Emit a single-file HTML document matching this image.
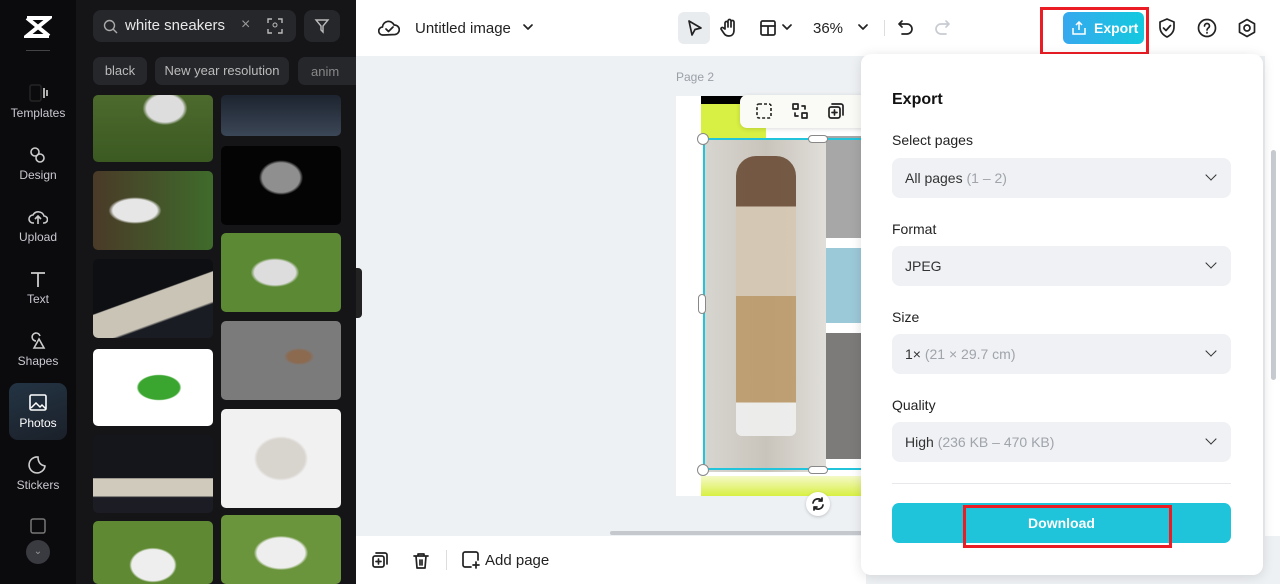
<!DOCTYPE html>
<html><head><meta charset="utf-8"><style>
*{box-sizing:border-box;margin:0;padding:0}
body{width:1280px;height:584px;overflow:hidden;font-family:"Liberation Sans",sans-serif;background:#eef1f4;position:relative}
.abs{position:absolute}
.nav{left:0;top:0;width:76px;height:584px;background:#0b0b0e}
.navi{position:absolute;left:0;width:76px;text-align:center;color:#c9c9cf;font-size:12px}
.navi svg{display:block;margin:0 auto 4px}
.panel{left:76px;top:0;width:280px;height:584px;background:#151518}
.tile{position:absolute;border-radius:5px;overflow:hidden}
.top{left:356px;top:0;width:924px;height:56px;background:#fff}
.exp{left:861px;top:54px;width:402px;height:521px;background:#fff;border-radius:10px;box-shadow:0 2px 12px rgba(0,0,0,.12)}
.lbl{position:absolute;left:31px;font-size:14px;color:#222}
.sel{position:absolute;left:31px;width:339px;height:40px;background:#eff1f4;border-radius:8px;font-size:14px;color:#333;padding:12px 13px}
.sel span{color:#a0a4ab}
.sel i{position:absolute;right:16px;top:13px;width:8px;height:8px;border-right:1.6px solid #333;border-bottom:1.6px solid #333;transform:rotate(45deg)}
.ic{stroke:#222;fill:none;stroke-width:1.7;stroke-linecap:round;stroke-linejoin:round}
</style></head><body>
<div class="abs nav">
 <div class="navi" style="top:14px"><svg width="28" height="26" viewBox="0 0 28 26"><path d="M3 4h22L3 22h22M3 4l22 18" stroke="#fff" stroke-width="4" fill="none"/></svg></div>
 <div style="position:absolute;left:26px;top:50px;width:24px;height:1px;background:#444"></div>
 <div class="navi" style="top:84px"><svg width="20" height="18" viewBox="0 0 20 18"><rect x="2" y="1" width="11" height="16" rx="2" class="ic" stroke="#ccc"/><path d="M16 4v10M19 6v6" stroke="#ccc" stroke-width="1.7"/></svg>Templates</div>
 <div class="navi" style="top:146px"><svg width="20" height="18" viewBox="0 0 20 18"><circle cx="7" cy="6" r="4" stroke="#ccc" fill="none" stroke-width="1.6"/><circle cx="12" cy="12" r="4" stroke="#ccc" fill="none" stroke-width="1.6"/></svg>Design</div>
 <div class="navi" style="top:208px"><svg width="20" height="18" viewBox="0 0 20 18"><path d="M6 15H5a4 4 0 010-8 6 6 0 0111 1 3.5 3.5 0 010 7h-1M10 16V9M7 11l3-3 3 3" stroke="#ccc" fill="none" stroke-width="1.6"/></svg>Upload</div>
 <div class="navi" style="top:270px"><svg width="20" height="18" viewBox="0 0 20 18"><path d="M3 3h14M10 3v14" stroke="#ccc" stroke-width="1.8"/></svg>Text</div>
 <div class="navi" style="top:332px"><svg width="20" height="18" viewBox="0 0 20 18"><path d="M8 9a4 4 0 114-5M6 16l5-9 5 9z" stroke="#ccc" fill="none" stroke-width="1.6"/></svg>Shapes</div>
 <div style="position:absolute;left:9px;top:383px;width:58px;height:57px;border-radius:9px;background:linear-gradient(160deg,#243444,#1a2029)"></div>
 <div class="navi" style="top:394px;color:#fff"><svg width="20" height="18" viewBox="0 0 20 18"><rect x="2" y="1" width="16" height="15" rx="1.5" stroke="#fff" fill="none" stroke-width="1.6"/><path d="M3 14l5-5 4 4 2-2 4 4" stroke="#fff" fill="none" stroke-width="1.5"/></svg>Photos</div>
 <div class="navi" style="top:456px"><svg width="20" height="18" viewBox="0 0 20 18"><path d="M17 10A8 8 0 1110 1c0 5 2 8 7 9z" stroke="#ccc" fill="none" stroke-width="1.6"/></svg>Stickers</div>
 <div class="navi" style="top:518px"><svg width="18" height="16"><rect x="2" y="1" width="14" height="14" rx="2" stroke="#777" fill="none" stroke-width="1.5"/></svg></div>
 <div style="position:absolute;left:26px;top:540px;width:24px;height:24px;border-radius:50%;background:#3a3b40;color:#999;font-size:10px;text-align:center;line-height:24px">⌄</div>
</div>
<div class="abs panel">
 <div class="abs" style="left:17px;top:10px;width:203px;height:32px;background:#26272b;border-radius:8px;color:#e8e8e8;font-size:15px;padding:7px 0 0 32px">white sneakers
  <svg class="abs" style="left:10px;top:9px" width="15" height="15"><circle cx="6.5" cy="6.5" r="5" stroke="#aaa" fill="none" stroke-width="1.4"/><path d="M10 10l4 4" stroke="#aaa" stroke-width="1.4"/></svg>
  <span class="abs" style="left:148px;top:6px;color:#999;font-size:16px">×</span>
  <svg class="abs" style="left:174px;top:8px" width="16" height="16"><path d="M1 5V1h4M11 1h4v4M15 11v4h-4M5 15H1v-4" stroke="#bbb" fill="none" stroke-width="1.4"/><circle cx="8" cy="7" r="2" stroke="#bbb" fill="none"/></svg>
 </div>
 <div class="abs" style="left:228px;top:10px;width:36px;height:32px;background:#26272b;border-radius:8px"><svg class="abs" style="left:10px;top:8px" width="16" height="16"><path d="M2 2h12l-5 6v6l-2-2V8z" stroke="#bbb" fill="none" stroke-width="1.4"/></svg></div>
 <div class="abs" style="left:17px;top:57px;width:54px;height:28px;background:#26272b;border-radius:7px;color:#bbb;font-size:13px;text-align:center;line-height:28px">black</div>
 <div class="abs" style="left:79px;top:57px;width:134px;height:28px;background:#26272b;border-radius:7px;color:#bbb;font-size:13px;text-align:center;line-height:28px">New year resolution</div>
 <div class="abs" style="left:222px;top:57px;width:58px;height:28px;background:#26272b;border-radius:7px 0 0 7px;color:#888;font-size:13px;padding:7px 0 0 13px;overflow:hidden">anim</div>
 <div class="tile" style="left:17px;top:95px;width:120px;height:67px;background:radial-gradient(ellipse at 60% 20%,#ddd 0 18%,transparent 22%),linear-gradient(#4d6a2d,#3b5a22)"></div>
 <div class="tile" style="left:17px;top:171px;width:120px;height:79px;background:radial-gradient(ellipse at 35% 50%,#e6e6e6 0 20%,transparent 24%),linear-gradient(90deg,#4a3a28,#3f6b2b)"></div>
 <div class="tile" style="left:17px;top:259px;width:120px;height:79px;background:linear-gradient(160deg,#0e0f13 0 45%,#c9c4b6 46% 70%,#1a1c24 72%)"></div>
 <div class="tile" style="left:17px;top:349px;width:120px;height:77px;background:radial-gradient(ellipse at 55% 50%,#3aa630 0 22%,transparent 24%),#fff"></div>
 <div class="tile" style="left:17px;top:435px;width:120px;height:78px;background:linear-gradient(#15161b 0 55%,#cfcabc 56% 78%,#1c1d24 80%)"></div>
 <div class="tile" style="left:17px;top:521px;width:120px;height:63px;background:radial-gradient(ellipse at 50% 70%,#eee 0 25%,transparent 28%),#5f8a33"></div>
 <div class="tile" style="left:145px;top:95px;width:120px;height:41px;background:linear-gradient(#1d2430,#3b4656)"></div>
 <div class="tile" style="left:145px;top:146px;width:120px;height:79px;background:radial-gradient(ellipse at 50% 40%,#8f8f8f 0 22%,transparent 26%),#040404"></div>
 <div class="tile" style="left:145px;top:233px;width:120px;height:79px;background:radial-gradient(ellipse at 45% 50%,#ddd 0 22%,transparent 26%),#5c8a34"></div>
 <div class="tile" style="left:145px;top:321px;width:120px;height:79px;background:radial-gradient(ellipse at 65% 45%,#8b6a50 0 10%,transparent 14%),#7c7b7c"></div>
 <div class="tile" style="left:145px;top:409px;width:120px;height:99px;background:radial-gradient(ellipse at 50% 50%,#d8d4ce 0 28%,transparent 32%),#f1f1f1"></div>
 <div class="tile" style="left:145px;top:515px;width:120px;height:69px;background:radial-gradient(ellipse at 50% 55%,#eee 0 28%,transparent 32%),#6b953c"></div>
</div>
<div class="abs" style="left:356px;top:268px;width:6px;height:50px;background:#222;border-radius:0 4px 4px 0"></div>
<div class="abs top">
 <svg class="abs" style="left:22px;top:18px" width="22" height="20"><path d="M6 17H5a4 4 0 01-.5-8A6 6 0 0116 7a4.5 4.5 0 011 9.5L6 17zM8 11l2.5 2.5L15 9" class="ic"/></svg>
 <div class="abs" style="left:59px;top:20px;font-size:15px;color:#222">Untitled image</div>
 <svg class="abs" style="left:166px;top:22px" width="12" height="10"><path d="M2 3l4 4 4-4" class="ic"/></svg>
 <div class="abs" style="left:322px;top:12px;width:32px;height:32px;background:#e9ecef;border-radius:6px"><svg style="margin:7px 0 0 9px" width="16" height="18"><path d="M2 2l12 7-6 1.5L5 16z" class="ic"/></svg></div>
 <svg class="abs" style="left:364px;top:18px" width="18" height="20"><path d="M5 11V5a1.5 1.5 0 013 0v4V3a1.5 1.5 0 013 0v6V4a1.5 1.5 0 013 0v8c0 4-2 6-5 6s-4-1-6-4l-2-3a1.4 1.4 0 012.5-1z" class="ic"/></svg>
 <svg class="abs" style="left:403px;top:19px" width="18" height="18"><rect x="2" y="2" width="14" height="14" rx="1.5" class="ic"/><path d="M2 7h14M9 7v9" class="ic"/></svg>
 <svg class="abs" style="left:426px;top:23px" width="10" height="8"><path d="M1 2l4 4 4-4" class="ic"/></svg>
 <div class="abs" style="left:457px;top:20px;font-size:15px;color:#222">36%</div>
 <svg class="abs" style="left:502px;top:23px" width="10" height="8"><path d="M1 2l4 4 4-4" class="ic"/></svg>
 <div class="abs" style="left:528px;top:20px;width:1px;height:16px;background:#ddd"></div>
 <svg class="abs" style="left:541px;top:19px" width="18" height="18"><path d="M5 2L2 5l3 3M2 5h8a5 5 0 010 10H5" class="ic"/></svg>
 <svg class="abs" style="left:577px;top:19px" width="18" height="18"><path d="M13 2l3 3-3 3M16 5H8a5 5 0 000 10h5" class="ic" style="stroke:#c8ccd2"/></svg>
 <div class="abs" style="left:684px;top:7px;width:109px;height:48px;border:3px solid #ec1c24"></div>
 <div class="abs" style="left:707px;top:12px;width:81px;height:32px;border-radius:6px;background:linear-gradient(90deg,#37a8ee,#13c9df);color:#fff;font-weight:bold;font-size:14px;padding:8px 0 0 31px;white-space:nowrap">Export
  <svg class="abs" style="left:9px;top:9px" width="14" height="14"><path d="M4 4l3-3 3 3M7 1v8M1 7v6h12V7" stroke="#fff" fill="none" stroke-width="1.5"/></svg></div>
 <svg class="abs" style="left:802px;top:18px" width="18" height="20"><path d="M9 1l7 3v5c0 5-3 8-7 10-4-2-7-5-7-10V4zM5.5 10l2.5 2.5 4.5-5" class="ic"/></svg>
 <svg class="abs" style="left:841px;top:18px" width="20" height="20"><circle cx="10" cy="10" r="8.5" class="ic"/><path d="M7.5 8a2.5 2.5 0 115 0c0 2-2.5 2-2.5 4M10 14.5v.5" class="ic"/></svg>
 <svg class="abs" style="left:881px;top:18px" width="20" height="20"><path d="M10 1.5l7.5 4.25v8.5L10 18.5l-7.5-4.25v-8.5z" class="ic"/><circle cx="10" cy="10" r="3" class="ic"/></svg>
</div>
<div class="abs" style="left:676px;top:70px;font-size:12px;color:#9aa0a8">Page 2</div>
<div class="abs" style="left:676px;top:96px;width:185px;height:400px;background:#fff;overflow:hidden">
 <div class="abs" style="left:25px;top:0;width:160px;height:42px;background:#d8f043"></div>
 <div class="abs" style="left:25px;top:0;width:160px;height:8px;background:#000"></div>
 <div class="abs" style="left:90px;top:10px;width:95px;height:32px;background:#fff"></div>
 <div class="abs" style="left:27px;top:42px;width:158px;height:334px;background:linear-gradient(90deg,#d8d6d1 0,#c9c4bb 40%,#e2e0dc 80%)"></div>
 <div class="abs" style="left:60px;top:60px;width:60px;height:280px;background:linear-gradient(#6a4c36 0 18%,#d5c8b3 18% 50%,#bb9a6a 50% 88%,#f0f0f0 88%);border-radius:20px 20px 6px 6px;opacity:.9"></div>
 <div class="abs" style="left:150px;top:40px;width:35px;height:340px;background:linear-gradient(#a7a7a7 0 30%,#fff 30% 33%,#9cc9d8 33% 55%,#fff 55% 58%,#7d7b7a 58% 95%,#fff 95%)"></div>
 <div class="abs" style="left:25px;top:380px;width:160px;height:20px;background:linear-gradient(#f4f9c8,#d8f043)"></div>
 <div class="abs" style="left:27px;top:42px;width:160px;height:332px;border:2px solid #22c4dc"></div>
</div>
<div class="abs" style="left:697px;top:133px;width:12px;height:12px;border-radius:50%;background:#fff;border:1px solid #888"></div>
<div class="abs" style="left:697px;top:464px;width:12px;height:12px;border-radius:50%;background:#fff;border:1px solid #888"></div>
<div class="abs" style="left:698px;top:294px;width:8px;height:20px;border-radius:4px;background:#fff;border:1px solid #888"></div>
<div class="abs" style="left:808px;top:135px;width:20px;height:8px;border-radius:4px;background:#fff;border:1px solid #888"></div>
<div class="abs" style="left:808px;top:466px;width:20px;height:8px;border-radius:4px;background:#fff;border:1px solid #888"></div>
<div class="abs" style="left:740px;top:95px;width:125px;height:33px;background:#fafaf6;border-radius:7px 0 0 7px;box-shadow:0 1px 5px rgba(0,0,0,.15)">
 <svg class="abs" style="left:16px;top:8px" width="16" height="16"><rect x="1" y="1" width="14" height="14" rx="2" stroke="#222" fill="none" stroke-width="1.6" stroke-dasharray="3 2"/></svg>
 <svg class="abs" style="left:52px;top:8px" width="16" height="16"><rect x="1" y="1" width="5" height="5" class="ic"/><rect x="10" y="10" width="5" height="5" class="ic"/><path d="M10 3h3v3M6 13H3v-3" class="ic"/></svg>
 <svg class="abs" style="left:88px;top:8px" width="16" height="16"><rect x="1" y="4" width="11" height="11" rx="2" class="ic"/><path d="M4 1h9a2 2 0 012 2v9M6.5 7v5M4 9.5h5" class="ic"/></svg>
</div>
<div class="abs" style="left:806px;top:492px;width:24px;height:24px;border-radius:50%;background:#fff;box-shadow:0 1px 3px rgba(0,0,0,.2)"><svg style="margin:5px" width="14" height="14"><path d="M2 6a5 5 0 019-2M12 8a5 5 0 01-9 2M11 1v3H8M3 13v-3h3" class="ic" stroke-width="1.4"/></svg></div>
<div class="abs" style="left:610px;top:531px;width:260px;height:4px;background:#c5c9ce;border-radius:2px"></div>
<div class="abs" style="left:356px;top:536px;width:510px;height:48px;background:#fff">
 <svg class="abs" style="left:16px;top:16px" width="18" height="18"><rect x="1" y="4" width="11" height="11" rx="2" class="ic"/><path d="M4 1h9a2 2 0 012 2v9M6.5 7v5M4 9.5h5" class="ic"/></svg>
 <svg class="abs" style="left:56px;top:16px" width="18" height="18"><path d="M2 4h14M6 4V2h6v2M4 4l1 12h8l1-12M8 8v5M10 8v5" class="ic"/></svg>
 <div class="abs" style="left:90px;top:14px;width:1px;height:20px;background:#ddd"></div>
 <svg class="abs" style="left:106px;top:15px" width="18" height="18"><path d="M16 9V3a2 2 0 00-2-2H3a2 2 0 00-2 2v11a2 2 0 002 2h6M14 11v6M11 14h6" class="ic"/></svg>
 <div class="abs" style="left:129px;top:16px;font-size:15px;color:#222">Add page</div>
</div>
<div class="abs" style="left:1265px;top:56px;width:15px;height:480px;background:#fff"></div>
<div class="abs" style="left:1271px;top:150px;width:5px;height:230px;background:#c7cace;border-radius:3px"></div>
<div class="abs exp">
 <div class="lbl" style="top:37px;font-size:16px;font-weight:bold;color:#111">Export</div>
 <div class="lbl" style="top:78px">Select pages</div>
 <div class="sel" style="top:104px">All pages <span>(1 – 2)</span><i></i></div>
 <div class="lbl" style="top:167px">Format</div>
 <div class="sel" style="top:192px">JPEG<i></i></div>
 <div class="lbl" style="top:255px">Size</div>
 <div class="sel" style="top:280px">1× <span>(21 × 29.7 cm)</span><i></i></div>
 <div class="lbl" style="top:343px">Quality</div>
 <div class="sel" style="top:368px">High <span>(236 KB – 470 KB)</span><i></i></div>
 <div class="abs" style="left:31px;top:429px;width:339px;height:1px;background:#e6e8eb"></div>
 <div class="abs" style="left:31px;top:449px;width:339px;height:40px;background:#1fc4da;border-radius:7px;color:#fff;font-weight:bold;font-size:14px;text-align:center;line-height:40px">Download</div>
 <div class="abs" style="left:102px;top:451px;width:209px;height:43px;border:3px solid #ec1c24"></div>
</div>
</body></html>
